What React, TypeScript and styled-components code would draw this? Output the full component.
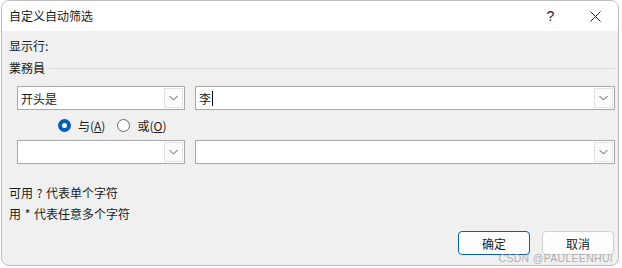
import styled, { createGlobalStyle } from "styled-components";

const GlobalStyle = createGlobalStyle`
  html, body {
    margin: 0;
    padding: 0;
    background: #ffffff;
    font-family: "Noto Sans CJK SC", "Noto Sans", sans-serif;
    font-size: 12px;
    color: #1a1a1a;
  }
`;

const Dialog = styled.div`
  position: relative;
  box-sizing: border-box;
  width: 618px;
  height: 266px;
  margin-left: 1px;
  border: 1px solid #bdbdbd;
  border-radius: 8px;
  overflow: hidden;
  display: flex;
  flex-direction: column;
  background: #f0f0f0;
`;

const TitleBar = styled.div`
  height: 30px;
  background: #ffffff;
  display: flex;
  align-items: center;
  padding-left: 7px;
  flex-shrink: 0;
`;

const Title = styled.div`
  flex: 1;
  font-size: 12px;
  line-height: 16px;
`;

const TitleButton = styled.div`
  width: 45px;
  height: 30px;
  display: flex;
  align-items: center;
  justify-content: center;
  font-family: "Liberation Sans", sans-serif;
  font-size: 14px;
  color: #222;
`;

const Body = styled.div`
  flex: 1;
  display: flex;
  flex-direction: column;
  padding: 7px 3px 0 7px;
`;

const Label = styled.div`
  line-height: 16px;
  font-size: 12px;
`;

const GroupHeader = styled.div`
  display: flex;
  align-items: center;
  gap: 4px;
  margin-top: 6px;
  line-height: 16px;

  &::after {
    content: "";
    flex: 1;
    height: 1px;
    background: #d9d9d9;
  }
`;

const FilterRow = styled.div<{ $top: number }>`
  display: flex;
  gap: 10px;
  margin-top: ${(p) => p.$top}px;
  padding-left: 8px;
`;

const Field = styled.div<{ $width: number }>`
  box-sizing: border-box;
  width: ${(p) => p.$width}px;
  height: 24px;
  border: 1px solid #a8a8a8;
  background: #ffffff;
  display: flex;
  align-items: stretch;
`;

const FieldText = styled.div`
  flex: 1;
  display: flex;
  align-items: center;
  padding-left: 3px;
  font-size: 12px;
`;

const Caret = styled.span`
  display: inline-block;
  width: 1px;
  height: 15px;
  background: #000;
  margin-left: 1px;
`;

const DropButton = styled.div`
  box-sizing: border-box;
  width: 19px;
  margin: 1px;
  border: 1px solid #e3e3e3;
  background: #fbfbfb;
  display: flex;
  align-items: center;
  justify-content: center;
`;

const RadioRow = styled.div`
  display: flex;
  align-items: center;
  margin-top: 7px;
  padding-left: 49px;
  height: 16px;
`;

const RadioItem = styled.label`
  display: flex;
  align-items: center;
  gap: 7px;
  margin-right: 12px;
  font-size: 12px;
`;

const RadioDot = styled.span<{ $checked?: boolean }>`
  box-sizing: border-box;
  width: 13px;
  height: 13px;
  border-radius: 50%;
  border: ${(p) => (p.$checked ? "4px solid #005fb8" : "1px solid #6a6a6a")};
  background: #fff;
`;

const Hint = styled.div<{ $top: number }>`
  line-height: 16px;
  margin-top: ${(p) => p.$top}px;
  word-spacing: 1px;
`;

const ButtonBar = styled.div`
  display: flex;
  justify-content: flex-end;
  gap: 12px;
  margin-top: 9px;
  padding-right: 1px;
`;

const Button = styled.div<{ $primary?: boolean }>`
  box-sizing: border-box;
  width: 72px;
  height: 24px;
  border-radius: 4px;
  background: #fdfdfd;
  border: 1px solid ${(p) => (p.$primary ? "#005fb8" : "#d0d0d0")};
  display: flex;
  align-items: center;
  justify-content: center;
  font-size: 12px;
`;

const Watermark = styled.div`
  position: absolute;
  right: 5px;
  bottom: 1px;
  font-family: "Liberation Sans", sans-serif;
  font-size: 10.5px;
  letter-spacing: 0.3px;
  color: rgba(150, 150, 150, 0.75);
`;

const Chevron = () => (
  <svg width="9" height="6" viewBox="0 0 9 6">
    <path d="M0.5 1 L4.5 5 L8.5 1" fill="none" stroke="#5a5a5a" strokeWidth="1" />
  </svg>
);

const Combo = (props: { width: number; value?: string; caret?: boolean }) => (
  <Field $width={props.width}>
    <FieldText>
      {props.value}
      {props.caret && <Caret />}
    </FieldText>
    <DropButton>
      <Chevron />
    </DropButton>
  </Field>
);

export default function App() {
  return (
    <>
      <GlobalStyle />
      <Dialog>
        <TitleBar>
          <Title>自定义自动筛选</Title>
          <TitleButton>?</TitleButton>
          <TitleButton>
            <svg width="11" height="11" viewBox="0 0 11 11">
              <path d="M0.5 0.5 L10.5 10.5 M10.5 0.5 L0.5 10.5" stroke="#222" strokeWidth="1" />
            </svg>
          </TitleButton>
        </TitleBar>
        <Body>
          <Label>显示行:</Label>
          <GroupHeader>業務員</GroupHeader>
          <FilterRow $top={10}>
            <Combo width={168} value="开头是" />
            <Combo width={420} value="李" caret />
          </FilterRow>
          <RadioRow>
            <RadioItem>
              <RadioDot $checked />
              <span>
                与(<u>A</u>)
              </span>
            </RadioItem>
            <RadioItem>
              <RadioDot />
              <span>
                或(<u>O</u>)
              </span>
            </RadioItem>
          </RadioRow>
          <FilterRow $top={7}>
            <Combo width={168} />
            <Combo width={420} />
          </FilterRow>
          <Hint $top={21}>可用 ? 代表单个字符</Hint>
          <Hint $top={5}>用 * 代表任意多个字符</Hint>
          <ButtonBar>
            <Button $primary>确定</Button>
            <Button>取消</Button>
          </ButtonBar>
        </Body>
        <Watermark>CSDN @PAULEENHUI</Watermark>
      </Dialog>
    </>
  );
}
